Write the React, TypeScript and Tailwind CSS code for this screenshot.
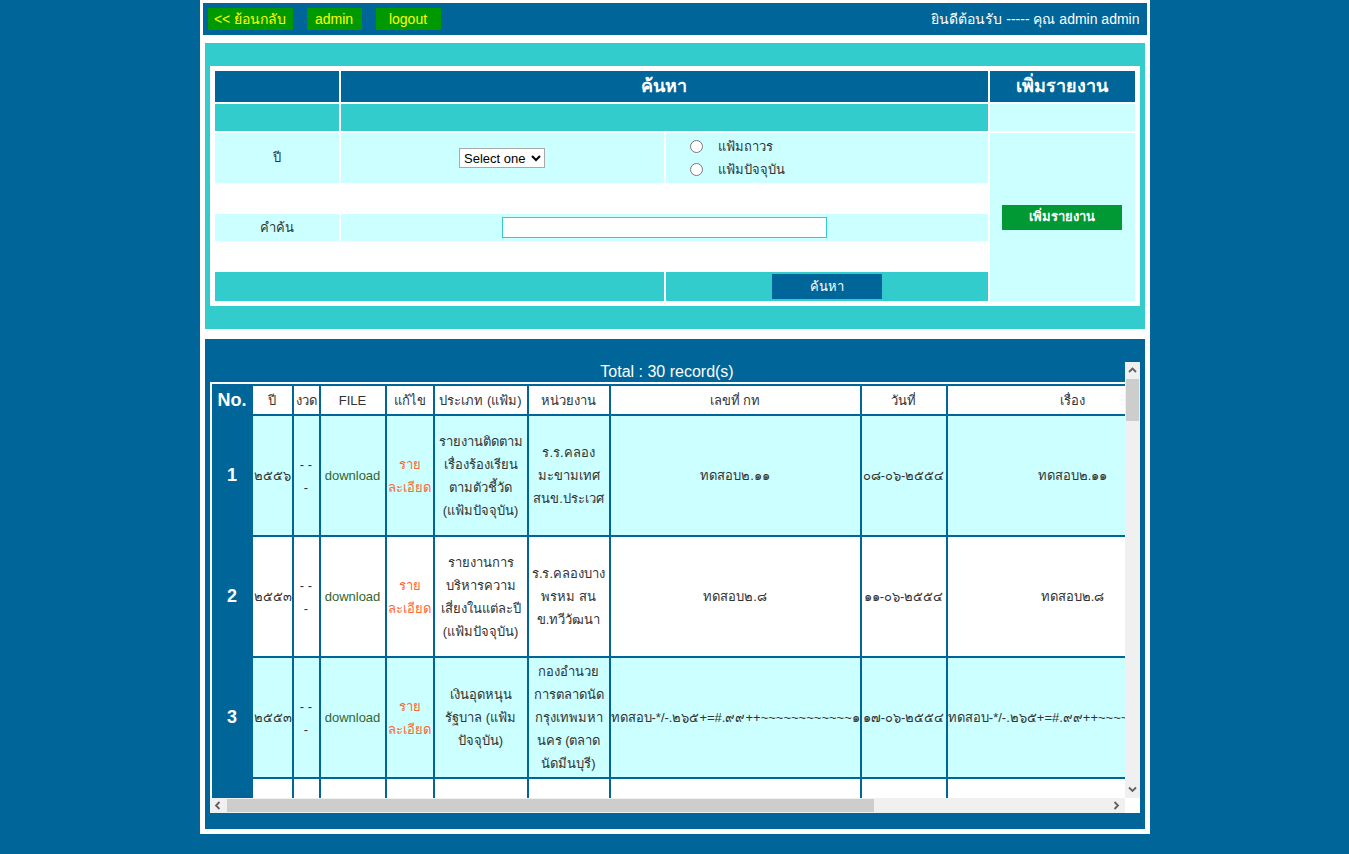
import React from 'react';

type Row = {
  year: string;
  type: string[];
  unit: string[];
  doc: string;
  date: string;
  subject: string;
};

const longText = 'ทดสอบ-*/-.๒๖๕+=#.๙๙++~~~~~~~~~~~~๑';

const baseRows: Row[] = [
  {
    year: '๒๕๕๖',
    type: ['รายงานติดตาม', 'เรื่องร้องเรียน', 'ตามตัวชี้วัด', '(แฟ้มปัจจุบัน)'],
    unit: ['ร.ร.คลอง', 'มะขามเทศ', 'สนข.ประเวศ'],
    doc: 'ทดสอบ๒.๑๑',
    date: '๐๘-๐๖-๒๕๕๔',
    subject: 'ทดสอบ๒.๑๑',
  },
  {
    year: '๒๕๕๓',
    type: ['รายงานการ', 'บริหารความ', 'เสี่ยงในแต่ละปี', '(แฟ้มปัจจุบัน)'],
    unit: ['ร.ร.คลองบาง', 'พรหม สน', 'ข.ทวีวัฒนา'],
    doc: 'ทดสอบ๒.๘',
    date: '๑๑-๐๖-๒๕๕๔',
    subject: 'ทดสอบ๒.๘',
  },
  {
    year: '๒๕๕๓',
    type: ['เงินอุดหนุน', 'รัฐบาล (แฟ้ม', 'ปัจจุบัน)'],
    unit: ['กองอำนวย', 'การตลาดนัด', 'กรุงเทพมหา', 'นคร (ตลาด', 'นัดมีนบุรี)'],
    doc: longText,
    date: '๑๗-๐๖-๒๕๕๔',
    subject: longText,
  },
];

// 30 records, the first three are the ones on screen
const rows: Row[] = Array.from({ length: 30 }, (_, i) => baseRows[i % 3]);

const Lines: React.FC<{ lines: string[] }> = ({ lines }) => (
  <>
    {lines.map((l, i) => (
      <div key={i} className="whitespace-nowrap">{l}</div>
    ))}
  </>
);

// classic scrollbar arrow
const Arrow: React.FC<{ dir: 'up' | 'down' | 'left' | 'right' }> = ({ dir }) => {
  const pts = {
    up: '1,5 4.5,1.5 8,5',
    down: '1,1.5 4.5,5 8,1.5',
    left: '5.5,1 2,4.5 5.5,8',
    right: '2.5,1 6,4.5 2.5,8',
  }[dir];
  const vertical = dir === 'up' || dir === 'down';
  return (
    <svg width={vertical ? 9 : 8} height={vertical ? 7 : 9} viewBox={vertical ? '0 0 9 7' : '0 0 8 9'}>
      <polyline points={pts} fill="none" stroke="#606060" strokeWidth="1.8" />
    </svg>
  );
};

export default function App() {
  return (
    <div className="min-h-screen bg-[#006699] font-['Liberation_Sans','Noto_Sans',sans-serif] text-[#333333]">
      <div className="mx-auto w-[950px] bg-white p-[3px] pb-[5px]">
        {/* top bar */}
        <div className="flex h-[32px] items-center justify-between bg-[#006699] pl-[5px] pr-[7px]">
          <div className="flex gap-[14px]">
            <button className="flex h-[22px] w-[85px] items-center justify-center bg-[#009900] text-[14px] text-[#ffff00]">&lt;&lt; ย้อนกลับ</button>
            <button className="flex h-[22px] w-[55px] items-center justify-center bg-[#009900] text-[14px] text-[#ffff00]">admin</button>
            <button className="flex h-[22px] w-[65px] items-center justify-center bg-[#009900] text-[14px] text-[#ffff00]">logout</button>
          </div>
          <span className="text-[14px] text-white">ยินดีต้อนรับ ----- คุณ admin admin</span>
        </div>

        {/* search panel */}
        <div className="mx-[2px] mt-[8px] bg-[#33cccc] px-[5px] py-[23px]">
          <div className="bg-white p-[5px]">
            <div className="grid grid-cols-[124px_323px_322px_145px] grid-rows-[31px_27px_50px_27px_27px_27px_29px] gap-[2px] text-[13px]">
              <div className="bg-[#006699]" />
              <div className="col-span-2 flex items-center justify-center bg-[#006699] text-[18px] font-bold text-white">ค้นหา</div>
              <div className="flex items-center justify-center bg-[#006699] text-[18px] font-bold text-white">เพิ่มรายงาน</div>

              <div className="bg-[#33cccc]" />
              <div className="col-span-2 bg-[#33cccc]" />
              <div className="bg-[#ccffff]" />

              <div className="flex items-center justify-center bg-[#ccffff]">ปี</div>
              <div className="flex items-center justify-center bg-[#ccffff]">
                <select className="h-[20px] w-[86px] border border-[#a9a9a9] bg-white text-[13px] text-black">
                  <option>Select one</option>
                </select>
              </div>
              <div className="flex flex-col justify-center gap-[4px] bg-[#ccffff] pl-[24px]">
                <label className="flex h-[19px] items-center gap-[15px]">
                  <input type="radio" name="kind" className="h-[13px] w-[13px]" />
                  <span>แฟ้มถาวร</span>
                </label>
                <label className="flex h-[19px] items-center gap-[15px]">
                  <input type="radio" name="kind" className="h-[13px] w-[13px]" />
                  <span>แฟ้มปัจจุบัน</span>
                </label>
              </div>
              <div className="row-span-5 flex items-center justify-center bg-[#ccffff]">
                <button className="h-[25px] w-[120px] bg-[#009933] text-[13px] font-bold text-white">เพิ่มรายงาน</button>
              </div>

              <div className="col-span-3" />

              <div className="flex items-center justify-center bg-[#ccffff]">คำค้น</div>
              <div className="col-span-2 flex items-center justify-center bg-[#ccffff]">
                <input type="text" className="h-[21px] w-[325px] border border-[#33cccc] bg-white" />
              </div>

              <div className="col-span-3" />

              <div className="col-span-2 bg-[#33cccc]" />
              <div className="flex items-center justify-center bg-[#33cccc]">
                <button className="h-[25px] w-[110px] bg-[#006699] text-[13px] text-white">ค้นหา</button>
              </div>
            </div>
          </div>
        </div>

        {/* result panel */}
        <div className="mx-[2px] mt-[10px] bg-[#006699] px-[5px] pb-[16px] pt-[23px]">
          <div className="flex h-[451px] w-[930px] flex-col">
            <div className="flex h-[436px]">
              {/* viewport */}
              <div className="w-[915px] overflow-hidden">
                <div className="h-[20px] text-center text-[16px] leading-[20px] text-white">Total : 30 record(s)</div>
                <table className="w-[1240px] table-fixed border-separate border-spacing-[2px] border-2 border-white bg-[#006699] text-[13px] leading-[23px]">
                  <colgroup>
                    <col className="w-[37px]" />
                    <col className="w-[39px]" />
                    <col className="w-[25px]" />
                    <col className="w-[64px]" />
                    <col className="w-[46px]" />
                    <col className="w-[92px]" />
                    <col className="w-[80px]" />
                    <col className="w-[249px]" />
                    <col className="w-[84px]" />
                    <col className="w-[250px]" />
                    <col className="w-[120px]" />
                    <col className="w-[124px]" />
                  </colgroup>
                  <thead>
                    <tr className="h-[28px]">
                      <th className="bg-[#006699] text-[18px] font-bold text-white">No.</th>
                      <th className="bg-white font-normal">ปี</th>
                      <th className="bg-white font-normal">งวด</th>
                      <th className="bg-white font-normal">FILE</th>
                      <th className="bg-white font-normal">แก้ไข</th>
                      <th className="whitespace-nowrap bg-white font-normal">ประเภท (แฟ้ม)</th>
                      <th className="bg-white font-normal">หน่วยงาน</th>
                      <th className="bg-white font-normal">เลขที่ กท</th>
                      <th className="bg-white font-normal">วันที่</th>
                      <th className="bg-white font-normal">เรื่อง</th>
                      <th className="bg-white font-normal">ผู้รับผิดชอบ</th>
                      <th className="bg-white font-normal">ลบ</th>
                    </tr>
                  </thead>
                  <tbody>
                    {rows.map((r, i) => {
                      const bg = i % 2 === 0 ? 'bg-[#ccffff]' : 'bg-white';
                      return (
                        <tr key={i} className="h-[119px] text-center align-middle">
                          <td className="bg-[#006699] text-[18px] font-bold text-white">{i + 1}</td>
                          <td className={`${bg} px-px`}>{r.year}</td>
                          <td className={bg}>- -<br />-</td>
                          <td className={`${bg} text-[#336633]`}>download</td>
                          <td className={`${bg} text-[#ff6633]`}>ราย<br />ละเอียด</td>
                          <td className={bg}><Lines lines={r.type} /></td>
                          <td className={bg}><Lines lines={r.unit} /></td>
                          <td className={`${bg} overflow-hidden whitespace-nowrap`}>{r.doc}</td>
                          <td className={`${bg} whitespace-nowrap`}>{r.date}</td>
                          <td className={`${bg} overflow-hidden whitespace-nowrap`}>{r.subject}</td>
                          <td className={bg}>admin</td>
                          <td className={`${bg} text-[#ff6633]`}>ลบ</td>
                        </tr>
                      );
                    })}
                  </tbody>
                </table>
              </div>
              {/* vertical scrollbar */}
              <div className="flex w-[15px] flex-col bg-[#f0f0f0]">
                <div className="flex h-[17px] items-center justify-center"><Arrow dir="up" /></div>
                <div className="flex-1">
                  <div className="mx-[1px] h-[42px] bg-[#cdcdcd]" />
                </div>
                <div className="flex h-[17px] items-center justify-center"><Arrow dir="down" /></div>
              </div>
            </div>
            {/* horizontal scrollbar */}
            <div className="flex h-[15px]">
              <div className="flex w-[915px] bg-[#f0f0f0]">
                <div className="flex w-[17px] items-center justify-center"><Arrow dir="left" /></div>
                <div className="flex-1 py-[1px]">
                  <div className="h-full w-[647px] bg-[#cdcdcd]" />
                </div>
                <div className="flex w-[17px] items-center justify-center"><Arrow dir="right" /></div>
              </div>
              <div className="w-[15px] bg-white" />
            </div>
          </div>
        </div>
      </div>
    </div>
  );
}
